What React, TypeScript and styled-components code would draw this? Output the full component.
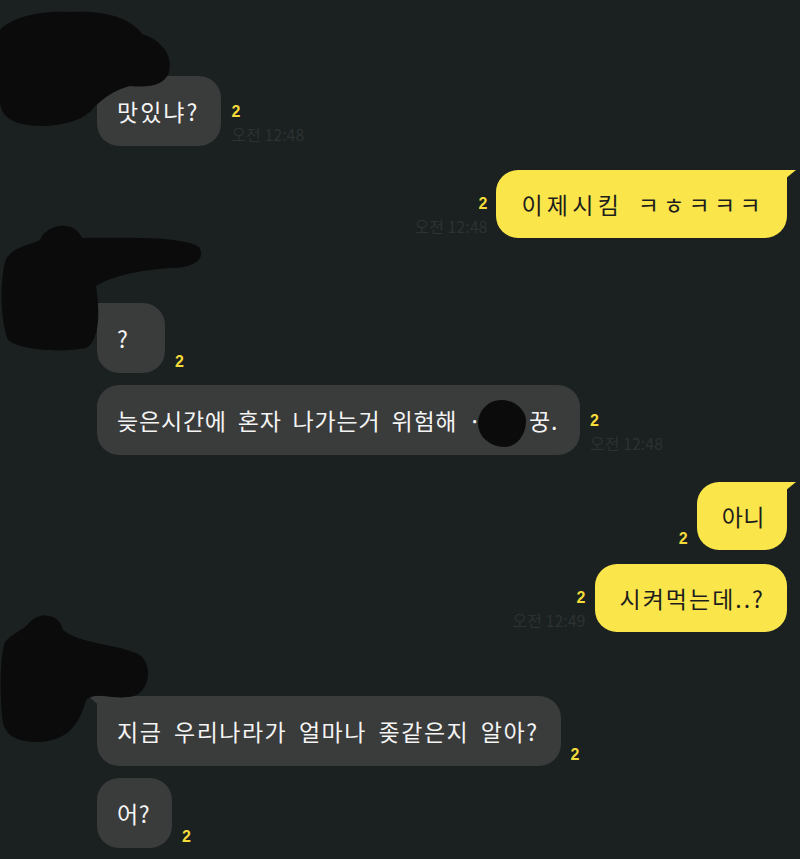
import React, { FC } from "react";
import styled, { createGlobalStyle, css } from "styled-components";

const GlobalStyle = createGlobalStyle`
  html, body {
    margin: 0;
    padding: 0;
    background: #1b2020;
  }
  body {
    font-family: "Noto Sans CJK KR", "Noto Sans", sans-serif;
  }
`;

const Screen = styled.div`
  position: relative;
  width: 800px;
  height: 859px;
  overflow: hidden;
  box-sizing: border-box;
  padding: 0 13px 0 97px;
  display: flex;
  flex-direction: column;
  background: #1b2020;
`;

const Row = styled.div<{ $mine?: boolean; $gap: number }>`
  display: flex;
  flex-direction: ${(p) => (p.$mine ? "row-reverse" : "row")};
  align-items: flex-end;
  gap: ${(p) => (p.$mine ? 9 : 10)}px;
  margin-top: ${(p) => p.$gap}px;
`;

const leftTail = css`
  border-top-left-radius: 4px;
  &::before {
    content: "";
    position: absolute;
    left: -9px;
    top: 0;
    width: 14px;
    height: 12px;
    background: #3a3b3b;
    clip-path: polygon(0 0, 100% 0, 100% 100%);
  }
`;

const rightTail = css`
  border-top-right-radius: 4px;
  &::after {
    content: "";
    position: absolute;
    right: -9px;
    top: 0;
    width: 16px;
    height: 13px;
    background: #fae54a;
    clip-path: polygon(0 0, 100% 0, 0 100%);
  }
`;

const Bubble = styled.div<{ $mine?: boolean; $tail?: boolean; $spacing?: number }>`
  position: relative;
  box-sizing: border-box;
  height: ${(p) => (p.$mine ? 68 : 70)}px;
  min-width: 68px;
  display: flex;
  align-items: center;
  padding: ${(p) => (p.$mine ? "0 22px 0 25px" : "0 22px 0 20px")};
  border-radius: 22px;
  background: ${(p) => (p.$mine ? "#fae54a" : "#3a3b3b")};
  color: ${(p) => (p.$mine ? "#1d1d1d" : "#f4f4f4")};
  font-size: 23px;
  line-height: 30px;
  letter-spacing: ${(p) => p.$spacing ?? 0.5}px;
  word-spacing: 5px;
  white-space: nowrap;
  ${(p) => p.$tail && (p.$mine ? rightTail : leftTail)}
`;

const Censor = styled.span`
  display: inline-block;
  width: 48px;
  height: 47px;
  margin: -12px 3px -12px -4px;
  vertical-align: middle;
  background: #0b0b0b;
  border-radius: 48% 52% 45% 55% / 50% 45% 55% 50%;
`;

const Meta = styled.div<{ $mine?: boolean }>`
  display: flex;
  flex-direction: column;
  align-items: ${(p) => (p.$mine ? "flex-end" : "flex-start")};
  gap: 5px;
  padding-bottom: 3px;
`;

const ReadCount = styled.span`
  font-family: "Liberation Sans", Arial, sans-serif;
  font-weight: bold;
  font-size: 16px;
  line-height: 17px;
  color: #f3dc3a;
`;

const Time = styled.span`
  font-family: "Noto Sans CJK KR", "Noto Sans", sans-serif;
  font-size: 16px;
  line-height: 18px;
  color: #2c3232;
`;

const Redactions = styled.svg`
  position: absolute;
  left: 0;
  top: 0;
  pointer-events: none;
`;

type Msg = {
  text: React.ReactNode;
  mine?: boolean;
  tail?: boolean;
  gap: number;
  time?: string;
  spacing?: number;
};

const messages: Msg[] = [
  { text: "맛있냐?", tail: true, gap: 76, time: "오전 12:48", spacing: 2 },
  { text: "이제시킴 ㅋㅎㅋㅋㅋ", mine: true, tail: true, gap: 24, time: "오전 12:48", spacing: 4.3 },
  { text: "?", tail: true, gap: 65 },
  {
    text: (
      <>
        늦은시간에 혼자 나가는거 위험해 ·<Censor />꿍.
      </>
    ),
    gap: 12,
    time: "오전 12:48",
    spacing: 0.8,
  },
  { text: "아니", mine: true, tail: true, gap: 27 },
  { text: "시켜먹는데..?", mine: true, gap: 14, time: "오전 12:49", spacing: 2 },
  { text: "지금 우리나라가 얼마나 좆같은지 알아?", tail: true, gap: 64, spacing: 1.5 },
  { text: "어?", gap: 12 },
];

const Message: FC<Msg> = ({ text, mine, tail, gap, time, spacing }) => (
  <Row $mine={mine} $gap={gap}>
    <Bubble $mine={mine} $tail={tail} $spacing={spacing}>
      <span>{text}</span>
    </Bubble>
    <Meta $mine={mine}>
      <ReadCount>2</ReadCount>
      {time && <Time>{time}</Time>}
    </Meta>
  </Row>
);

const App: FC = () => {
  return (
    <>
      <GlobalStyle />
      <Screen>
        {messages.map((m, i) => (
          <Message key={i} {...m} />
        ))}
        {/* scribbled-out profile pictures and names */}
        <Redactions width={800} height={859} viewBox="0 0 800 859">
          <g fill="#0b0b0b">
            <path d="M0,30 C10,18 40,10 70,12 C100,10 130,16 142,34 C162,40 173,56 169,72 C165,85 150,88 130,86 C114,90 100,100 90,112 C74,126 40,129 18,123 C4,118 0,110 0,100 Z" />
            <path d="M5,262 C10,247 28,246 40,240 C46,224 74,219 82,238 C122,238 182,236 199,247 C206,258 196,268 170,268 C140,270 112,276 96,286 C100,312 100,340 86,348 C60,353 20,350 8,340 C0,320 0,282 5,262 Z" />
            <path d="M5,642 C14,632 24,630 30,622 C40,611 60,614 63,630 C82,645 120,644 140,655 C153,666 150,690 134,696 C114,701 96,690 86,700 C80,722 70,740 40,742 C14,742 3,735 2,715 C0,690 0,656 5,642 Z" />
          </g>
        </Redactions>
      </Screen>
    </>
  );
};

export default App;
